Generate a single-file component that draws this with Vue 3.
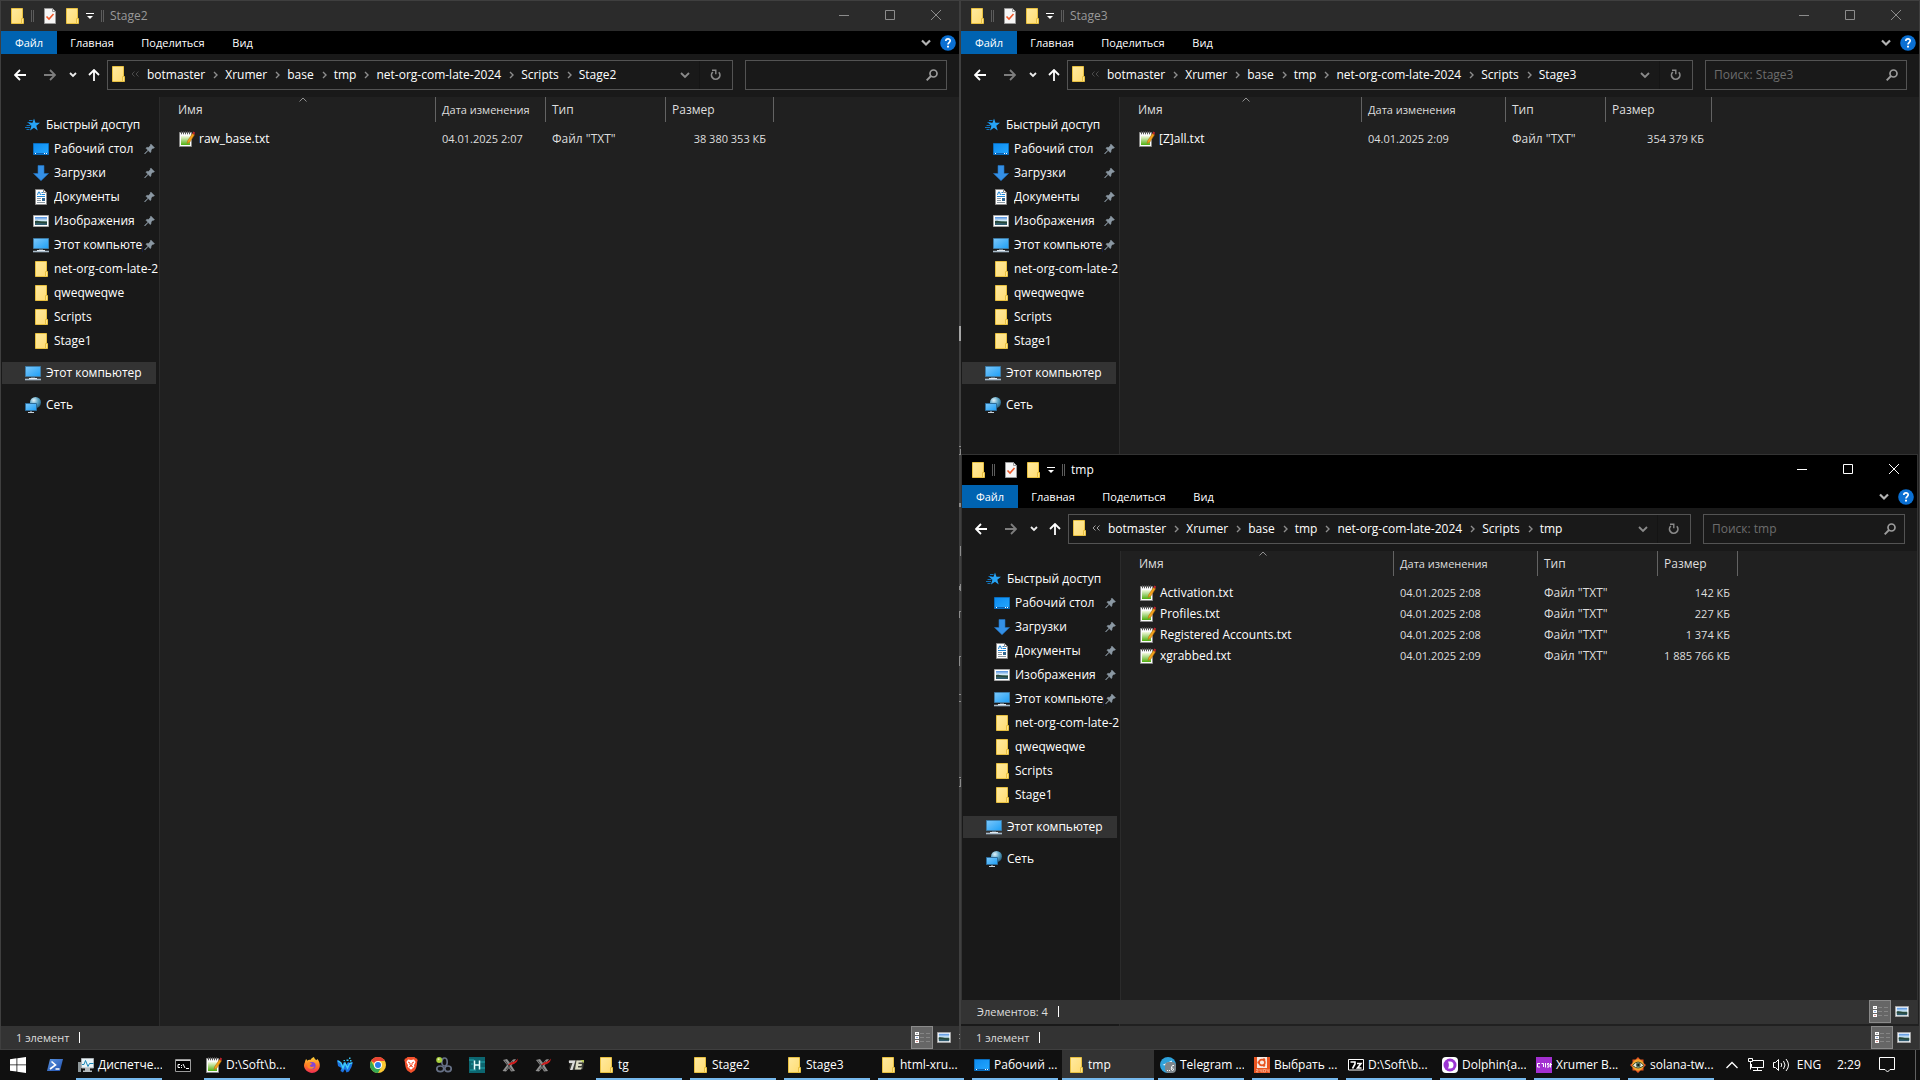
<script setup>
const nav = [
  { icon: 'desktop', text: 'Рабочий стол', pin: true },
  { icon: 'download', text: 'Загрузки', pin: true },
  { icon: 'document', text: 'Документы', pin: true },
  { icon: 'picture', text: 'Изображения', pin: true },
  { icon: 'pc', text: 'Этот компьютер', pin: true },
  { icon: 'folder', text: 'net-org-com-late-2024' },
  { icon: 'folder', text: 'qweqweqwe' },
  { icon: 'folder', text: 'Scripts' },
  { icon: 'folder', text: 'Stage1' },
]

const crumbs = ['botmaster', 'Xrumer', 'base', 'tmp', 'net-org-com-late-2024', 'Scripts']

const windows = [
  {
    title: 'Stage2',
    search: '',
    status: '1 элемент',
    cols: [265, 110, 120, 108],
    files: [{ name: 'raw_base.txt', date: '04.01.2025 2:07', size: '38 380 353 КБ' }],
  },
  {
    title: 'Stage3',
    search: 'Поиск: Stage3',
    status: '1 элемент',
    cols: [231, 144, 100, 106],
    files: [{ name: '[Z]all.txt', date: '04.01.2025 2:09', size: '354 379 КБ' }],
  },
  {
    title: 'tmp',
    active: true,
    search: 'Поиск: tmp',
    status: 'Элементов: 4',
    cols: [262, 144, 120, 80],
    files: [
      { name: 'Activation.txt', date: '04.01.2025 2:08', size: '142 КБ' },
      { name: 'Profiles.txt', date: '04.01.2025 2:08', size: '227 КБ' },
      { name: 'Registered Accounts.txt', date: '04.01.2025 2:08', size: '1 374 КБ' },
      { name: 'xgrabbed.txt', date: '04.01.2025 2:09', size: '1 885 766 КБ' },
    ],
  },
]

const pinned = [
  { icon: 'start', label: 'Пуск', cls: 'start' },
  { icon: 'powershell', label: 'PowerShell', cls: 'shell' },
  { icon: 'taskmgr', text: 'Диспетче...' },
  { icon: 'cmd', label: 'Командная строка', cls: 'cmd' },
  { icon: 'notepad', text: 'D:\\Soft\\b...' },
  { icon: 'firefox', label: 'Firefox', cls: 'after' },
  { icon: 'wolf', label: 'Waterfox' },
  { icon: 'chrome', label: 'Chrome' },
  { icon: 'brave', label: 'Brave' },
  { icon: 'loops', label: 'Clover' },
  { icon: 'hbox', label: 'H' },
  { icon: 'xrumer', label: 'XRumer' },
  { icon: 'xrumer', label: 'XRumer' },
  { icon: 'seven', label: '7E' },
]

const tasks = [
  { icon: 'folder', text: 'tg' },
  { icon: 'folder', text: 'Stage2' },
  { icon: 'folder', text: 'Stage3' },
  { icon: 'folder', text: 'html-xru...' },
  { icon: 'desktop', text: 'Рабочий ...' },
  { icon: 'folder', text: 'tmp', active: true },
  { icon: 'telegram', text: 'Telegram ...' },
  { icon: 'ubuntu', text: 'Выбрать ...' },
  { icon: 'sevenzip', text: 'D:\\Soft\\b...' },
  { icon: 'dolphin', text: 'Dolphin{a...' },
  { icon: 'crst', text: 'Xrumer B...' },
  { icon: 'eye', text: 'solana-tw...' },
]
</script>

<template>
  <div class="screen">
    <svg class="defs" aria-hidden="true">
      <defs>
        <linearGradient id="g-folder" x1="0" y1="0" x2="1" y2="1"><stop offset="0" stop-color="#ffeaa0" /><stop offset="1" stop-color="#ffdc73" /></linearGradient>
        <linearGradient id="g-screen" x1="0" y1="0" x2="1" y2="1"><stop offset="0" stop-color="#7cc8fb" /><stop offset="1" stop-color="#1e9ff5" /></linearGradient>
        <linearGradient id="g-desk" x1="0" y1="0" x2="1" y2="1"><stop offset="0" stop-color="#0d8bf0" /><stop offset="1" stop-color="#25a8ff" /></linearGradient>
        <linearGradient id="g-photo" x1="0" y1="0" x2="0" y2="1"><stop offset="0" stop-color="#4f8fe0" /><stop offset=".45" stop-color="#d6ecf8" /><stop offset=".6" stop-color="#3d6a5c" /><stop offset="1" stop-color="#2b5674" /></linearGradient>
        <linearGradient id="g-note" x1="0" y1="0" x2="0" y2="1"><stop offset="0" stop-color="#f4fae0" /><stop offset="1" stop-color="#4fae0f" /></linearGradient>
        <linearGradient id="g-ps" x1="0" y1="0" x2="1" y2="1"><stop offset="0" stop-color="#5c95e0" /><stop offset="1" stop-color="#1f4fae" /></linearGradient>
        <linearGradient id="g-fox" x1="0" y1="0" x2="0" y2="1"><stop offset="0" stop-color="#ffd83a" /><stop offset=".5" stop-color="#ff7a26" /><stop offset="1" stop-color="#f02c52" /></linearGradient>
        <radialGradient id="g-globe" cx=".35" cy=".3" r=".8"><stop offset="0" stop-color="#e2f3fa" /><stop offset=".5" stop-color="#5ba3c4" /><stop offset="1" stop-color="#1d5473" /></radialGradient>
        <symbol id="i-folder" viewBox="0 0 16 16"><path d="M2.500.500h11v15h-11z" fill="url(#g-folder)" stroke="#e8c040" /><path d="M12.500 10.500h2v5h-2z" fill="#ffe48a" stroke="#e8c040" /></symbol>
        <symbol id="i-check" viewBox="0 0 16 16"><path d="M2.500.500h8l3 3v12h-11z" fill="#f6f6f6" stroke="#9a9a9a" /><path d="M10.500.500v3h3" fill="none" stroke="#9a9a9a" /><path d="M4.500 8.500l2.500 2.500 4.500-5" fill="none" stroke="#f0592a" stroke-width="1.600" /></symbol>
        <symbol id="i-star" viewBox="0 0 16 16"><path d="M9 1.500l1.500 4.300h4.500l-3.700 2.900 1.400 4.700L9 10.700l-4 2.700 1.400-4.700-3.400-2.900h4.500z" fill="#27a4f5" /><path d="M4 3.500h3.500M2.500 5.500h3M1.500 8.500h4M0 10.500h5M1.500 12.500h3" stroke="#1375bd" /></symbol>
        <symbol id="i-desktop" viewBox="0 0 16 16"><path d="M.5 2.500h15v11H.5z" fill="url(#g-desk)" stroke="#0a6dbd" /><path d="M1 12.500h14" stroke="#0b5fae" /><path d="M2 12.500h1M11 12.500h1M13 12.500h1" stroke="#fff" /></symbol>
        <symbol id="i-download" viewBox="0 0 16 16"><path d="M5 .5h6v8h4.500L8 15.700.5 8.500H5z" fill="#3490e6" stroke="#2272bf" stroke-width=".6" /></symbol>
        <symbol id="i-document" viewBox="0 0 16 16"><path d="M2.500.500h8l3 3v12h-11z" fill="#fff" stroke="#8a8a8a" /><path d="M10.500.500v3h3" fill="none" stroke="#8a8a8a" /><path d="M4.500 6l1-3h1l1 3M8.500 3.500h1.500M8.500 5.500h3.500M4 7.500h8" fill="none" stroke="#1c84d4" /><path d="M4 9.500h4M4 11.500h4M4 13.500h8" stroke="#8b98a3" /><path d="M9 9h3v3H9z" fill="#34678f" /></symbol>
        <symbol id="i-picture" viewBox="0 0 16 16"><path d="M.5 2.500h15v11H.5z" fill="#fff" stroke="#a5a5a5" /><path d="M2 4h12v8H2z" fill="url(#g-photo)" /><path d="M2 8c3-1 5 1 12 1v1.500c-6 0-8-1-12-.5z" fill="#27463a" /></symbol>
        <symbol id="i-pc" viewBox="0 0 16 16"><path d="M.5 1.500h15v10H.5z" fill="url(#g-screen)" stroke="#3f7ca6" /><path d="M6 12.500h4" stroke="#5d6f7b" /><path d="M0 14.500h16" stroke="#a9bccb" stroke-width="1.600" /><path d="M4 13.500h8" stroke="#e2eaf0" /></symbol>
        <symbol id="i-net" viewBox="0 0 16 16"><circle cx="10.500" cy="5.500" r="5.500" fill="url(#g-globe)" /><path d="M.5 6.500h11v7H.5z" fill="url(#g-screen)" stroke="#2c6d9c" /><path d="M6 14v1.500M3 15.500h6" stroke="#c5d3dd" /></symbol>
        <symbol id="i-pin" viewBox="0 0 12 12"><path d="M7.500.5l4 4-1 .8-.8-.2-2 2c.3 1.200 0 2-.8 2.900L4.600 7.700 1 11.500.5 11l3.700-3.700L2 5c.9-.8 1.800-1 2.900-.7l2-2-.2-.8z" fill="#8b98a3" stroke="#8b98a3" stroke-width=".5" /></symbol>
        <symbol id="i-notepad" viewBox="0 0 16 16"><path d="M.5 1.500h12v14H.5z" fill="#fbfbfb" stroke="#888" /><path d="M2 5h9v9H2z" fill="url(#g-note)" /><path d="M2.500.3v3M4.500.3v3M6.500.3v3M8.500.3v3M10.500.3v3" stroke="#555" /><path d="M8 12.500l.8-3L13.500 2.500l2 1.300-4.600 7.200z" fill="#f3a21c" stroke="#a8640a" stroke-width=".5" /><path d="M13.500 2.500L14.300.5l1.700.9-.7 2.300z" fill="#c0232c" /></symbol>

        <symbol id="i-start" viewBox="0 0 16 16"><path d="M0 2.200l6.500-.9v6.200H0zM7.300 1.200L16 0v7.500H7.300zM0 8.300h6.500v6.300L0 13.700zM7.300 8.300H16V16l-8.700-1.200z" fill="#fff" /></symbol>
        <symbol id="i-powershell" viewBox="0 0 16 16"><path d="M3 2h13l-3 12H0z" fill="url(#g-ps)" /><path d="M4.500 4.500L8.500 8l-5.500 4M8.500 12h4" fill="none" stroke="#fff" stroke-width="1.600" /></symbol>
        <symbol id="i-taskmgr" viewBox="0 0 16 16"><path d="M0 5h3v10H0z" fill="#8d9699" /><path d="M3.500 1.500h12v9.500h-12z" fill="#e9f4f8" stroke="#a9b0b4" /><path d="M4 7.500h2l1.500-4 2.500 6 1.500-3h4" fill="none" stroke="#1785b5" /><path d="M7 11h5v2.500H7zM5 13.500h9V15H5z" fill="#b6bcbf" /></symbol>
        <symbol id="i-cmd" viewBox="0 0 16 16"><path d="M.5 2.500h15v12H.5z" fill="#000" stroke="#9b9b9b" /><path d="M1 3.500h14" stroke="#c9c9c9" /><path d="M5 7.500H3v3h2M6.500 8v1M6.500 10v1M8 7l2 4M11 11.500h3" fill="none" stroke="#fff" /></symbol>
        <symbol id="i-firefox" viewBox="0 0 16 16"><path d="M1 5c0-1 .6-2.300 1.300-3l.9 1.700C4 3 5.300 2.600 6.400 3 7 1.500 8.500.5 10 0c.2 1.500 1.200 2.300 2.300 3.200L13.400 2C15 4 16 6.500 15.800 9 15.400 13 12 16 8 16S0 12.600 0 8.600C0 7.200.4 6 1 5z" fill="url(#g-fox)" /><circle cx="8" cy="8.600" r="3.600" fill="#8345d8" /><path d="M3 6.500c2-1.500 3 0 5 .1-.3 1.400-2 1.300-2.300 2.400 1.100 1.400 3 1.300 4.800.3-1 3.100-5.500 3.400-7 .7z" fill="#ff8b22" /></symbol>
        <symbol id="i-wolf" viewBox="0 0 16 16"><path d="M0 3l3 1 2 4.500L7 5l2 3 2-3 2 1 3-1-1.500 5-2.500 4.500-2.500 1L8 12l-2 3.500L3.500 14l1-3L1 9z" fill="#1c74e4" /><path d="M1 4l3 2 2 5 2-5 2.500 5 2-4.500L15 6" fill="none" stroke="#3fcdf5" stroke-width="1.400" /><path d="M9.500 2.500h2V4h-2zM12 .5h1.500V2H12zM6.500 3h1.500v1H6.500zM13 3h1.500v1.500H13z" fill="#35c4f5" /></symbol>
        <symbol id="i-chrome" viewBox="0 0 16 16"><circle cx="8" cy="8" r="8" fill="#fcc934" /><path d="M8 8L1.070 4A8 8 0 0 1 14.930 4H8z" fill="#ea4335" /><path d="M1.070 4A8 8 0 0 0 8 16l3.460-6L8 8 4.540 10z" fill="#34a853" /><circle cx="8" cy="8" r="4" fill="#fff" /><circle cx="8" cy="8" r="3" fill="#2b7de9" /></symbol>
        <symbol id="i-brave" viewBox="0 0 16 16"><path d="M4.500 0h7L13 1.600l1-.1.700 2-.5 1.300C14 9 13 12.500 11.500 13.700L8 16l-3.500-2.300C3 12.500 2 9 1.800 4.800L1.300 3.500l.7-2 1 .1z" fill="#f4512c" /><path d="M8 3l3-.4L12.600 5 11 8.300l.4 1.500L8 12.800 4.600 9.800 5 8.300 3.400 5 5 2.600z" fill="#fff" /><path d="M5 5l2 1v2L8 9l1-1V6l2-1M6 10l2-1 2 1" fill="none" stroke="#f4512c" /></symbol>
        <symbol id="i-loops" viewBox="0 0 16 16"><g fill="none" stroke="#667085" stroke-width="1.700"><ellipse cx="8.500" cy="5" rx="2.700" ry="4" /><ellipse cx="4.300" cy="11.800" rx="3.500" ry="2.800" /><ellipse cx="12" cy="11.800" rx="3.200" ry="2.800" /></g><circle cx="3.200" cy="3" r="3" fill="#a7cf3c" /><circle cx="2.600" cy="2.300" r="1" fill="#e7f5b8" /></symbol>
        <symbol id="i-hbox" viewBox="0 0 16 16"><path d="M0 0h16v16H0z" fill="#0c6670" /><path d="M0 3h5M11 5h5M1 13h6M10 11h6M2 7h2" stroke="#23a6ad" /><path d="M5.500 3.500v9M10.500 3.500v9M5 8h6" stroke="#e9ffff" stroke-width="1.500" /></symbol>
        <symbol id="i-xrumer" viewBox="0 0 16 16"><path d="M1 3l4-1 3 4 3-3.500L14 2l-4.500 6.500L13 14l-4 .5-2-3.500-3 3.500-3.500-.5 4.500-6z" fill="#8f8f8f" /><path d="M3 3.500l7 10M11 4L4 13" stroke="#454545" /><path d="M6 8c3-4 7-2 9.800-6.500C16 6 11 8 6 8z" fill="#cf1c1c" /></symbol>
        <symbol id="i-seven" viewBox="0 0 16 16"><path d="M0 4l2-1h11l3 2-1 7-3 1H2l-1-2 1-3z" fill="#3c3d38" /><path d="M1 3.500h6.500L4.500 13H2l2.500-7H1z" fill="#dadada" /><path d="M8.500 3.500H15l-.5 2H10.500v1.500h3.500L13.500 9H10v1.500h4L13 12.500H7z" fill="#dcdcc6" /><path d="M12 3h4v3z" fill="#b7c958" /></symbol>
        <symbol id="i-telegram" viewBox="0 0 16 16"><circle cx="8" cy="8" r="8" fill="#2ea2dc" /><path d="M2.500 8L12 3.500l-1.500 8L6 8.500z" fill="#fff" /><rect x="5" y="5" width="11" height="11" rx="4" fill="#7d868c" /><path d="M7 13.500h1M9 13.500h1M14 8.500h-1.500c-1.500 1.500-1.500 5 0 5s1.500-2.500-1-2.500" fill="none" stroke="#fff" /></symbol>
        <symbol id="i-ubuntu" viewBox="0 0 16 16"><path d="M0 0h16v16H0z" fill="#e95420" /><path d="M3 0h10v11H3z" fill="#f7e9e2" /><circle cx="8" cy="5.500" r="2.900" fill="none" stroke="#e95420" stroke-width="1.600" /><g fill="#e95420"><circle cx="4.600" cy="5.500" r="1.200" /><circle cx="10" cy="2.500" r="1.200" /><circle cx="10" cy="8.500" r="1.200" /></g><path d="M2 12.500h2v1.500H2.500v1H4.500M6 12v2h2M8 12v3.500M9.500 12.500h2v2.500h-2zM13 12v2h2M15 12v3.500" fill="none" stroke="#f9b79c" stroke-width=".7" /></symbol>
        <symbol id="i-sevenzip" viewBox="0 0 16 16"><path d="M.5 2.500h15v10.500H.5z" fill="#000" stroke="#fff" /><path d="M2.500 5h4.500v2L4.500 11.500M9 6.500h4L9.500 11h4" fill="none" stroke="#fff" stroke-width="1.600" /></symbol>
        <symbol id="i-dolphin" viewBox="0 0 16 16"><rect width="16" height="16" rx="4" fill="#fff" /><circle cx="8" cy="8" r="6.500" fill="#9c35d2" /><path d="M6 4.500h2a3.500 3.500 0 0 1 0 7H6c1.200-2 1.200-5 0-7z" fill="#fff" /></symbol>
        <symbol id="i-crst" viewBox="0 0 16 16"><path d="M0 0h16v16H0z" fill="#a32fd0" /><path d="M4 6.500H1.500v3.500H4M5.500 6.500h2V10M9.500 6v4.500M13 6.500h-1.500v1.500h1.500V10h-2M13.500 7.500h2.500M14.500 6v4.500" fill="none" stroke="#fff" /></symbol>
        <symbol id="i-eye" viewBox="0 0 16 16"><path d="M8 0l2.300 2.500L13.500 2.500V6L16 8l-2.500 2.500v3H10.500L8 16l-2.500-2.500h-3v-3L0 8l2.500-2V2.500h3z" fill="#e5541f" /><circle cx="8" cy="8" r="5.800" fill="#f2a72e" /><path d="M2.500 8.500Q8 1.500 14 8.500 8 13.500 2.500 8.500z" fill="#eef0e2" stroke="#44522f" /><circle cx="8.300" cy="8" r="2.400" fill="#4b6a54" /><circle cx="8.300" cy="8" r="1.100" fill="#111" /></symbol>
      </defs>
    </svg>

    <main class="desktop">
      <section v-for="w in windows" :key="w.title" class="window" :class="{ active: w.active }" :aria-label="w.title">
        <header class="titlebar">
          <svg class="ic"><use href="#i-folder" /></svg>
          <span class="bars"></span>
          <button class="quick first" aria-label="Свойства"><svg class="ic"><use href="#i-check" /></svg></button>
          <button class="quick" aria-label="Новая папка"><svg class="ic"><use href="#i-folder" /></svg></button>
          <button class="quick" aria-label="Настройка панели"><svg width="8" height="8" viewBox="0 0 8 8"><path d="M0 1.500h8" stroke="#fff" /><path d="M1 4h6L4 7z" fill="#fff" /></svg></button>
          <span class="bars second"></span>
          <h1>{{ w.title }}</h1>
          <div class="controls">
            <button aria-label="Свернуть"><svg width="10" height="10" viewBox="0 0 10 10"><path d="M0 5.500h10" /></svg></button>
            <button aria-label="Развернуть"><svg width="10" height="10" viewBox="0 0 10 10"><path d="M.5.5h9v9h-9z" /></svg></button>
            <button aria-label="Закрыть"><svg width="10" height="10" viewBox="0 0 10 10"><path d="M0 0l10 10M10 0L0 10" /></svg></button>
          </div>
        </header>

        <nav class="ribbon">
          <button class="file">Файл</button>
          <button class="home">Главная</button>
          <button class="share">Поделиться</button>
          <button class="view">Вид</button>
          <button class="expand" aria-label="Развернуть ленту"><svg width="10" height="8" viewBox="0 0 10 8"><path d="M1 1.500l4 4 4-4" fill="none" stroke="#b4b4b4" stroke-width="2.200" /></svg></button>
          <button class="help" aria-label="Справка"><svg width="16" height="16" viewBox="0 0 16 16"><circle cx="8" cy="8" r="7.800" fill="#0a6fd2" /><path d="M5.800 6c0-3 4.500-2.800 4.400-.2C10.100 7.500 8 7.600 8 9.500" fill="none" stroke="#fff" stroke-width="1.700" /><path d="M7 10.800h2v1.800H7z" fill="#fff" /></svg></button>
        </nav>

        <div class="toolbar">
          <button class="back" aria-label="Назад"><svg width="12" height="12" viewBox="0 0 12 12"><path d="M12 6H1.500M6 1L1 6l5 5" fill="none" stroke="#fff" stroke-width="1.800" /></svg></button>
          <button class="fwd" aria-label="Вперед"><svg width="12" height="12" viewBox="0 0 12 12"><path d="M0 6h10.500M6 1l5 5-5 5" fill="none" stroke="#7d7d7d" stroke-width="1.800" /></svg></button>
          <button class="recent" aria-label="Последние расположения"><svg width="8" height="6" viewBox="0 0 8 6"><path d="M1 1l3 3 3-3" fill="none" stroke="#ededed" stroke-width="1.800" /></svg></button>
          <button class="up" aria-label="Вверх"><svg width="12" height="12" viewBox="0 0 12 12"><path d="M6 12V1.500M1 6l5-5 5 5" fill="none" stroke="#fff" stroke-width="1.800" /></svg></button>
          <div class="address">
            <svg class="ic place"><use href="#i-folder" /></svg>
            <svg class="dots" width="8" height="6" viewBox="0 0 8 6"><path d="M3.500.5L1 3l2.500 2.500M7.500.5L5 3l2.500 2.500" fill="none" stroke="currentColor" /></svg>
            <ol>
              <li v-for="(c, i) in crumbs" :key="i">
                <a href="#">{{ c }}</a>
                <svg width="5" height="8" viewBox="0 0 5 8"><path d="M1 1l3 3-3 3" fill="none" stroke="#8d8d8d" stroke-width="1.400" /></svg>
              </li>
              <li><a href="#">{{ w.title }}</a></li>
            </ol>
            <button class="drop" aria-label="Предыдущие расположения"><svg width="10" height="7" viewBox="0 0 10 7"><path d="M1 1l4 4 4-4" fill="none" stroke="#8a8a8a" stroke-width="1.800" /></svg></button>
            <button class="refresh" aria-label="Обновить"><svg width="12" height="12" viewBox="0 0 12 12"><path d="M8.800 3.200a4.200 4.200 0 1 1-6-.2" fill="none" stroke="#8a8a8a" stroke-width="1.700" /><path d="M2 1.200h3.800v4" fill="none" stroke="#8a8a8a" stroke-width="1.400" /></svg></button>
          </div>
          <div class="search">
            <input type="text" :placeholder="w.search" aria-label="Поиск" />
            <svg width="12" height="12" viewBox="0 0 12 12"><circle cx="7.500" cy="4.500" r="3.500" fill="none" stroke="#9c9c9c" stroke-width="1.700" /><path d="M5 7L.7 11.300" stroke="#9c9c9c" stroke-width="1.900" /></svg>
          </div>
        </div>

        <div class="body">
          <nav class="tree">
            <a href="#" class="root"><svg class="ic"><use href="#i-star" /></svg><span>Быстрый доступ</span></a>
            <a v-for="n in nav" :key="n.text" href="#">
              <svg class="ic"><use :href="'#i-' + n.icon" /></svg>
              <span>{{ n.text }}</span>
              <svg v-if="n.pin" class="pin"><use href="#i-pin" /></svg>
            </a>
            <a href="#" class="root selected"><svg class="ic"><use href="#i-pc" /></svg><span>Этот компьютер</span></a>
            <a href="#" class="root"><svg class="ic"><use href="#i-net" /></svg><span>Сеть</span></a>
          </nav>
          <div class="list">
            <table>
              <colgroup><col v-for="(c, i) in w.cols" :key="i" :style="{ width: c + 'px' }" /></colgroup>
              <thead>
                <tr>
                  <th class="name">Имя<svg class="sort" width="8" height="5" viewBox="0 0 8 5"><path d="M.5 4.500L4 1l3.500 3.500" fill="none" stroke="#8f8f8f" /></svg></th>
                  <th class="small">Дата изменения</th>
                  <th>Тип</th>
                  <th>Размер</th>
                </tr>
              </thead>
              <tbody>
                <tr v-for="f in w.files" :key="f.name">
                  <td class="name"><div><svg class="ic"><use href="#i-notepad" /></svg>{{ f.name }}</div></td>
                  <td class="small">{{ f.date }}</td>
                  <td>Файл "TXT"</td>
                  <td class="small size">{{ f.size }}</td>
                </tr>
              </tbody>
            </table>
          </div>
        </div>

        <footer class="status">
          <span class="count">{{ w.status }}</span>
          <button class="mode on" aria-label="Таблица"><svg width="18" height="14" viewBox="0 0 18 14"><path d="M2 1h4v3H2zM2 5h4v3H2zM2 9h4v3H2z" fill="#fff" /><path d="M3.500 2h1v1h-1z" fill="#444" /><path d="M3.500 6h1v1h-1z" fill="#2763c5" /><path d="M3.500 10h1v1h-1z" fill="#b3231f" /><path d="M7 2.500h4M13 2.500h4M7 6.500h4M13 6.500h4M7 10.500h4M13 10.500h4" stroke="#858585" /></svg></button>
          <button class="mode" aria-label="Крупные значки"><svg width="14" height="11" viewBox="0 2 16 12" preserveAspectRatio="none"><use href="#i-picture" width="16" height="16" /></svg></button>
        </footer>
      </section>

      <svg class="gap" width="2" height="800" viewBox="0 0 2 800" aria-hidden="true">
        <path d="M0 26h2v15H0z" fill="#a6a6a6" />
        <path d="M0 146h2v1H0zM1 149h1v6H1zM0 154h2v1H0zM0 203h2v4H0zM1 246h1v10H1zM0 286h1v4H0zM1 284h1v7H1zM0 311h2v1H0zM0 312h1v6H0zM0 356h2v1H0zM0 357h1v9H0zM0 394h2v1H0zM0 401h2v1H0zM0 477h2v1H0zM1 479h1v8H1zM0 486h2v1H0zM0 734h1v1H0zM0 738h1v1H0z" fill="#8c8c8c" />
      </svg>
    </main>

    <footer class="taskbar">
      <template v-for="(p, i) in pinned" :key="i">
        <button v-if="p.text" class="task fixed"><svg class="ic"><use :href="'#i-' + p.icon" /></svg>{{ p.text }}</button>
        <button v-else class="app" :class="p.cls" :aria-label="p.label"><svg class="ic"><use :href="'#i-' + p.icon" /></svg></button>
      </template>
      <div class="tasks">
        <button v-for="(t, i) in tasks" :key="i" class="task" :class="{ current: t.active }"><svg class="ic"><use :href="'#i-' + t.icon" /></svg>{{ t.text }}</button>
      </div>
      <div class="tray">
        <button class="hidden-icons" aria-label="Скрытые значки"><svg width="12" height="8" viewBox="0 0 12 8"><path d="M.5 7L6 1.500 11.500 7" fill="none" stroke="#fff" stroke-width="1.300" /></svg></button>
        <button class="net" aria-label="Сеть"><svg width="16" height="14" viewBox="0 0 16 14"><path d="M5 2.500h10.500v7H3.500V6M9.500 9.500v3M5 12.500h9" fill="none" stroke="#fff" /><path d="M.5.5h4v3H.5zM2.500 3.500v8" fill="none" stroke="#fff" /></svg></button>
        <button class="sound" aria-label="Громкость"><svg width="17" height="14" viewBox="0 0 17 14"><path d="M.5 4.500h2l3-3v11l-3-3h-2zM8 5q1.500 2 0 4M10.500 3q3 4 0 8M13 1q5 6 0 12" fill="none" stroke="#fff" /></svg></button>
        <button class="lang">ENG</button>
        <time>2:29</time>
        <button class="notes" aria-label="Уведомления"><svg width="16" height="16" viewBox="0 0 16 16"><path d="M.5.5h15v12H11L8.500 15 6 12.500H.5z" fill="none" stroke="#fff" /></svg></button>
      </div>
    </footer>
  </div>
</template>

<style>
body {
  margin: 0;
  background: #101010;
}
</style>

<style scoped>
.screen {
  display: flex;
  flex-direction: column;
  min-height: 100vh;
  font: 12px/16px "Open Sans", "Noto Sans", sans-serif;
  color: #fff;
}
.defs {
  position: absolute;
  width: 0;
  height: 0;
}
button {
  display: flex;
  align-items: center;
  justify-content: center;
  margin: 0;
  padding: 0;
  border: 0;
  background: none;
  color: inherit;
  font: inherit;
  white-space: nowrap;
}
a {
  color: inherit;
  text-decoration: none;
}
svg {
  flex: none;
  display: block;
}
.ic {
  width: 16px;
  height: 16px;
}

.desktop {
  position: relative;
  flex: 1;
  display: grid;
  grid-template-columns: 1fr 1fr;
}
.window {
  display: flex;
  flex-direction: column;
  min-width: 0;
  border: 1px solid #3f3f3f;
  background: #191919;
}
.window.active {
  position: absolute;
  top: 454px;
  right: 2px;
  bottom: 26px;
  left: calc(50% + 1px);
  border-color: #333;
}
.gap {
  position: absolute;
  top: 300px;
  left: calc(50% - 1px);
  pointer-events: none;
}

.titlebar {
  display: flex;
  align-items: center;
  height: 30px;
  padding-left: 8px;
  background: #2b2b2b;
  color: #999;
}
.active .titlebar {
  background: #000;
  color: #fff;
}
.bars {
  width: 1px;
  height: 12px;
  margin-left: 6px;
  border: solid #5c5c5c;
  border-width: 0 1px;
}
.quick {
  margin-left: 6px;
}
.quick.first {
  margin-left: 8px;
}
.bars.second {
  margin-left: 7px;
}
.titlebar h1 {
  flex: 1;
  margin: 0 0 0 6px;
  font-size: 12px;
  font-weight: 400;
}
.controls {
  display: flex;
  align-self: stretch;
  padding-bottom: 2px;
}
.controls button {
  width: 46px;
}
.controls path {
  fill: none;
  stroke: #8c8c8c;
}
.active .controls path {
  stroke: #fff;
}

.ribbon {
  display: flex;
  height: 23px;
  background: #000;
  font-size: 11px;
}
.ribbon .file {
  width: 56px;
  background: #0063b1;
}
.ribbon .home {
  width: 70px;
}
.ribbon .share {
  width: 92px;
}
.ribbon .view {
  width: 47px;
}
.ribbon .expand {
  width: 24px;
  margin-left: auto;
}
.ribbon .help {
  width: 20px;
  margin-right: 1px;
}

.toolbar {
  display: flex;
  align-items: center;
  box-sizing: border-box;
  height: 43px;
  padding: 0 12px 1px 4px;
}
.toolbar .back,
.toolbar .fwd {
  width: 30px;
  height: 30px;
}
.toolbar .recent {
  width: 16px;
}
.toolbar .up {
  width: 26px;
}
.address,
.search {
  display: flex;
  align-items: center;
  box-sizing: border-box;
  height: 30px;
  border: 1px solid #535353;
}
.address {
  flex: 1;
  min-width: 0;
  padding-left: 2px;
}
.place {
  margin-bottom: 2px;
}
.dots {
  margin: 0 8px 2px 5px;
  color: #4a4a4a;
}
.active .dots {
  color: #a0a0a0;
}
ol {
  flex: 1;
  display: flex;
  margin: 0;
  padding: 0;
  list-style: none;
}
li {
  display: flex;
  align-items: center;
}
li svg {
  margin: 0 7px 0 8px;
}
.drop {
  width: 29px;
  height: 28px;
}
.refresh {
  width: 33px;
  height: 28px;
  border-left: 1px solid #141414;
}
.search {
  width: 202px;
  margin-left: 12px;
  padding: 0 8px;
}
input {
  flex: 1;
  min-width: 0;
  padding: 0;
  border: 0;
  outline: 0;
  background: none;
  color: #fff;
  font: inherit;
}
input::placeholder {
  color: #6d6d6d;
  opacity: 1;
}

.body {
  flex: 1;
  display: flex;
  min-height: 0;
}
.tree {
  box-sizing: border-box;
  width: 159px;
  padding: 16px 1px 0 1px;
  border-right: 1px solid #2b2b2b;
  overflow: hidden;
}
.tree a {
  display: flex;
  align-items: center;
  gap: 5px;
  height: 24px;
  padding-left: 31px;
  white-space: nowrap;
}
.tree span {
  flex: 1;
  min-width: 0;
  overflow: hidden;
}
.tree .root {
  padding-left: 23px;
}
.tree .selected {
  height: 22px;
  margin: 9px 2px 9px 0;
  background: #333;
}
.pin {
  width: 11px;
  height: 12px;
  margin: 0 3px 0 -4px;
}
.list {
  flex: 1;
  padding-left: 11px;
  background: #202020;
}
table {
  width: 0;
  table-layout: fixed;
  border-collapse: separate;
  border-spacing: 0;
}
th {
  position: relative;
  box-sizing: border-box;
  height: 25px;
  padding: 0 6px;
  border-right: 1px solid #636363;
  color: #dedede;
  font-weight: 400;
  text-align: left;
  white-space: nowrap;
}
th.name {
  padding-left: 7px;
}
.sort {
  position: absolute;
  top: 0;
  left: calc(50% - 4px);
}
tbody::before {
  content: "";
  display: block;
  height: 6px;
}
td {
  height: 21px;
  padding: 0 8px 0 6px;
  color: #dedede;
  white-space: nowrap;
}
td.name {
  padding-left: 8px;
  color: #fff;
}
.name div {
  display: flex;
  align-items: center;
  gap: 4px;
}
.small {
  font-size: 11px;
}
.size {
  text-align: right;
}

.status {
  display: flex;
  height: 23px;
  padding-right: 4px;
  background: #333;
}
.count {
  align-self: center;
  margin: 0 auto 0 15px;
  padding-right: 10px;
  border-right: 1px solid #fff;
  font-size: 11px;
  line-height: 11px;
  color: #dedede;
}
.mode {
  box-sizing: border-box;
  width: 22px;
}
.mode.on {
  border: 1px solid #8a8a8a;
  background: #666;
}

.taskbar {
  display: flex;
  height: 30px;
  background: #101010;
}
.app {
  width: 33px;
}
.start {
  width: 36px;
}
.shell {
  width: 38px;
  margin-right: 2px;
}
.cmd {
  width: 42px;
}
.after {
  margin-left: 5px;
}
.task {
  flex: 1;
  box-sizing: border-box;
  justify-content: flex-start;
  gap: 4px;
  min-width: 0;
  padding: 2px 0 0 2px;
  border-bottom: 2px solid #76b9ed;
  overflow: hidden;
}
.task.fixed {
  flex: none;
  width: 86px;
}
.tasks {
  flex: 1;
  display: flex;
  gap: 8px;
  min-width: 0;
  padding: 0 9px 0 4px;
}
.task.current {
  flex: 1 1 8px;
  margin: 0 -4px;
  padding-left: 6px;
  background: #333;
}
.tray {
  display: flex;
  align-items: center;
  margin-right: 4px;
  border-right: 1px solid #606060;
}
.tray button {
  height: 30px;
}
.hidden-icons {
  width: 18px;
}
.net {
  width: 30px;
}
.sound {
  width: 20px;
}
.lang {
  width: 36px;
}
time {
  width: 22px;
  margin-left: 10px;
  white-space: nowrap;
}
.notes {
  width: 56px;
}
</style>
